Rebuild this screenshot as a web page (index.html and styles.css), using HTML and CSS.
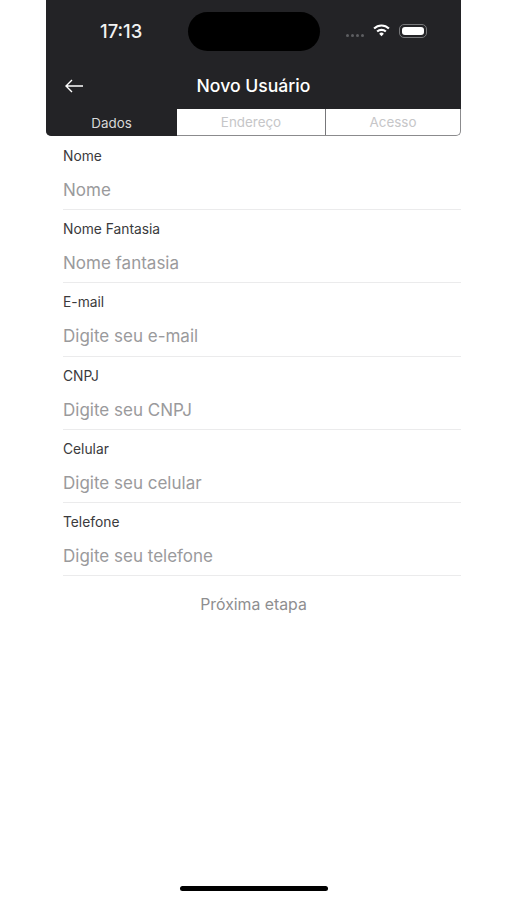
FILE: index.html
```html
<!DOCTYPE html>
<html lang="pt-BR">
<head>
    <meta charset="UTF-8">
    <meta name="viewport" content="width=device-width, initial-scale=1.0">
    <title>Novo Usuário</title>
    <link rel="stylesheet" href="styles.css">
</head>
<body>
    <div class="screen">
        <div class="header">
            <div class="status-bar">
                <span class="time">17:13</span>
                <div class="island"></div>
                <div class="status-icons">
                    <div class="signal"><i></i><i></i><i></i><i></i></div>
                    <svg class="wifi" width="17" height="13" viewBox="0 0 16 12">
                        <path d="M1 4.2 A10 10 0 0 1 15 4.2" fill="none" stroke="#fff" stroke-width="2"/>
                        <path d="M3.9 7 A6 6 0 0 1 12.1 7" fill="none" stroke="#fff" stroke-width="2"/>
                        <path d="M5.8 9 A3.2 3.2 0 0 1 10.2 9 L8 11.5 Z" fill="#fff"/>
                    </svg>
                    <div class="battery"><div class="battery-level"></div></div>
                </div>
            </div>
            <div class="nav-bar">
                <svg class="back" width="20" height="14" viewBox="0 0 20 14">
                    <path d="M19 7 H2 M8 1 L2 7 L8 13" fill="none" stroke="#fff" stroke-width="1.4"/>
                </svg>
                <span class="nav-title">Novo Usuário</span>
            </div>
        </div>

        <div class="tabs">
            <div class="tab tab-active">Dados</div>
            <div class="tab tab-middle">Endereço</div>
            <div class="tab">Acesso</div>
        </div>

        <form class="form">
            <div class="field">
                <label>Nome</label>
                <div class="placeholder">Nome</div>
            </div>
            <div class="field">
                <label>Nome Fantasia</label>
                <div class="placeholder">Nome fantasia</div>
            </div>
            <div class="field">
                <label>E-mail</label>
                <div class="placeholder">Digite seu e-mail</div>
            </div>
            <div class="field">
                <label>CNPJ</label>
                <div class="placeholder">Digite seu CNPJ</div>
            </div>
            <div class="field">
                <label>Celular</label>
                <div class="placeholder">Digite seu celular</div>
            </div>
            <div class="field">
                <label>Telefone</label>
                <div class="placeholder">Digite seu telefone</div>
            </div>
        </form>

        <div class="next">Próxima etapa</div>
    </div>
    <div class="home-indicator"></div>
</body>
</html>
```

FILE: styles.css
```css
html, body {
    margin: 0;
    padding: 0;
    height: 900px;
    overflow: hidden;
    background-color: #fff;
}

body {
    font-family: Inter, "Liberation Sans", sans-serif;
    position: relative;
}

.screen {
    width: 415px;
    margin-left: 46px;
}

.header {
    height: 109px;
    background-color: #232326;
    color: #fff;
}

.status-bar {
    height: 62px;
    display: flex;
    align-items: center;
    position: relative;
}

.time {
    margin-left: 54px;
    font-size: 18.4px;
    font-weight: 500;
    color: #f2f2f2;
}

.island {
    position: absolute;
    left: 142px;
    top: 12px;
    width: 132px;
    height: 39px;
    border-radius: 20px;
    background-color: #000;
}

.status-icons {
    display: flex;
    align-items: center;
    margin-left: auto;
    margin-right: 34px;
}

.signal {
    display: flex;
    gap: 2px;
    margin-top: 9px;
    margin-right: 9px;
}

.signal i {
    width: 3px;
    height: 3px;
    border-radius: 50%;
    background-color: #5d5e61;
}

.wifi {
    margin-right: 9px;
    margin-top: -2px;
}

.battery {
    width: 28px;
    height: 14px;
    box-sizing: border-box;
    padding: 2px;
    border: 1px solid #77787a;
    border-radius: 5px;
}

.battery-level {
    height: 100%;
    border-radius: 3px;
    background-color: #fff;
}

.nav-bar {
    height: 47px;
    display: flex;
    align-items: center;
    justify-content: center;
    position: relative;
}

.back {
    position: absolute;
    left: 18px;
    top: 17px;
}

.nav-title {
    font-size: 17.6px;
    font-weight: 500;
}

.tabs {
    display: flex;
    height: 27px;
    box-sizing: border-box;
    border: 1px solid #8b8b8d;
    border-top: none;
    border-radius: 0 0 5px 5px;
}

.tab {
    flex: 1;
    display: flex;
    align-items: center;
    justify-content: center;
    font-size: 13.4px;
    color: #c6c6c8;
}

.tab-active {
    flex: none;
    width: 131px;
    margin-left: -1px;
    margin-bottom: -1px;
    background-color: #232326;
    color: #d8d8d9;
    border-radius: 0 0 0 5px;
}

.tab-middle {
    flex: none;
    width: 149px;
    box-sizing: border-box;
    border-right: 1px solid #77777a;
}

.form {
    padding-left: 17px;
    padding-top: 1px;
}

.field {
    height: 73.2px;
    box-sizing: border-box;
    border-bottom: 1px solid #ebebec;
    padding-top: 11px;
}

.field label {
    display: block;
    font-size: 13.8px;
    line-height: 16px;
    color: #3a3a3c;
}

.placeholder {
    margin-top: 15px;
    font-size: 17px;
    line-height: 22px;
    color: #9a9a9c;
}

.next {
    margin-top: 19px;
    text-align: center;
    font-size: 15.8px;
    line-height: 20px;
    color: #8e8e90;
}

.home-indicator {
    position: absolute;
    left: 180px;
    top: 886px;
    width: 148px;
    height: 5px;
    border-radius: 3px;
    background-color: #000;
}
```
